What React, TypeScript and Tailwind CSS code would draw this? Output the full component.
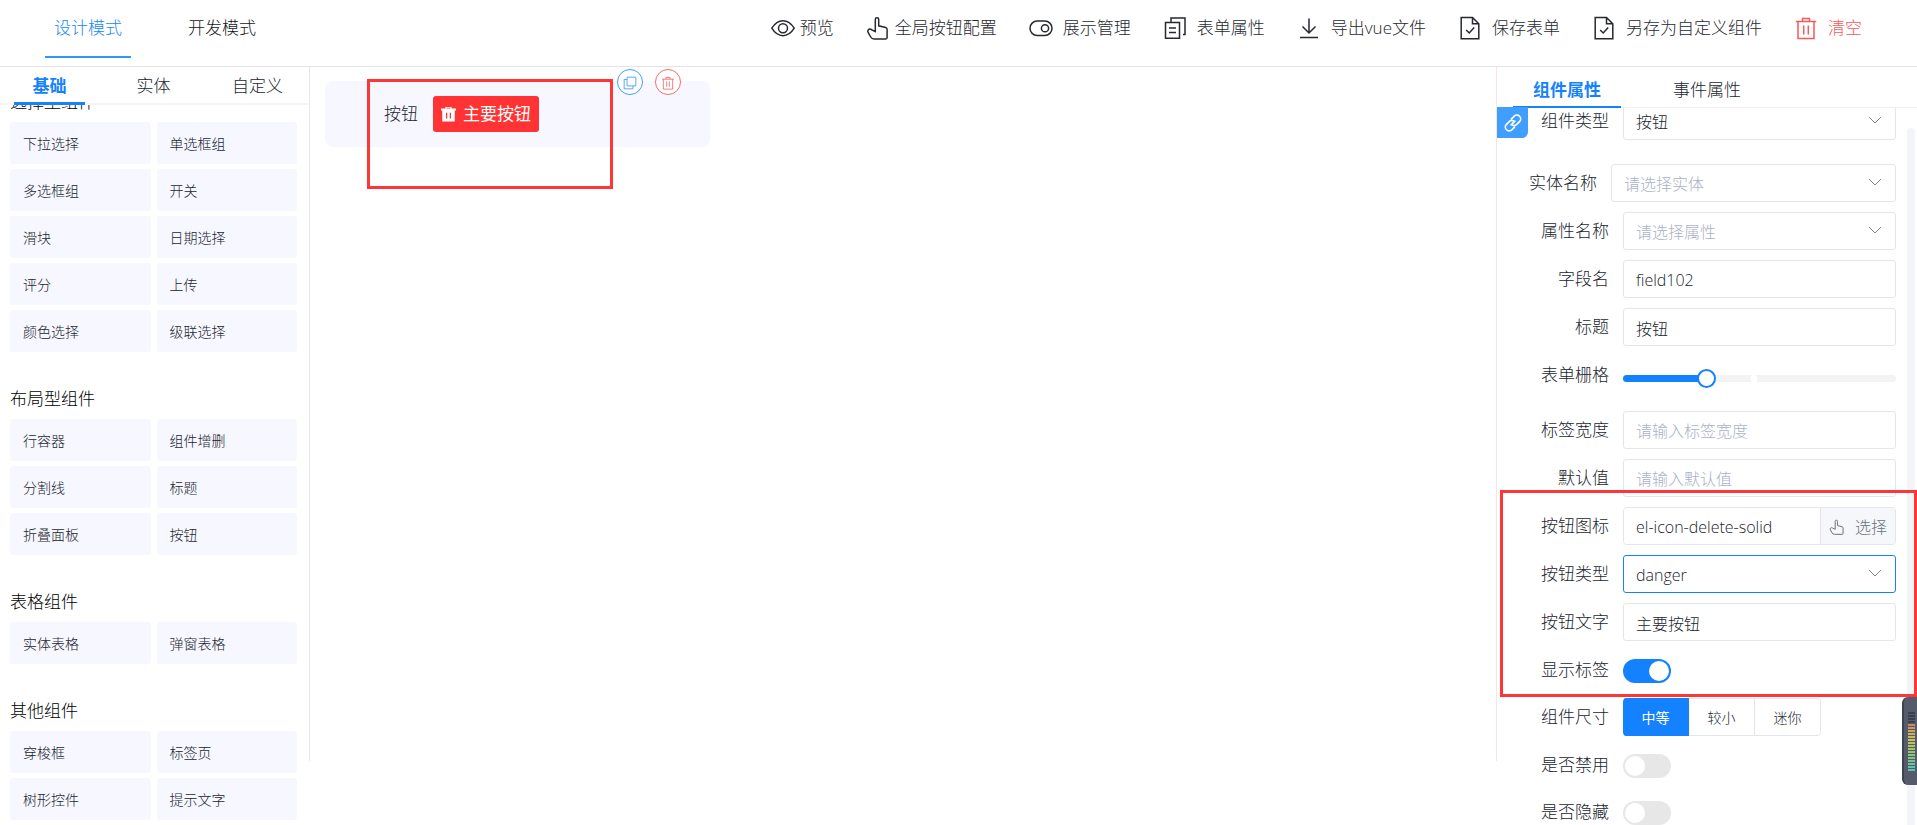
import React, { useState } from "react"

type IconProps = { className?: string }

const Svg: React.FC<React.PropsWithChildren<IconProps>> = ({ className, children }) => (
  <svg
    viewBox="0 0 24 24"
    fill="none"
    stroke="currentColor"
    strokeWidth="1.5"
    className={className ?? "size-6"}
    aria-hidden="true"
  >
    {children}
  </svg>
)

const EyeIcon: React.FC<IconProps> = ({ className }) => (
  <Svg className={className}>
    <path d="M.8 12.200C4 7 7.600 4.700 12 4.700s8 2.300 11.200 7.500c-3.200 5.200-6.800 7.500-11.200 7.500S4 17.400.8 12.200z" />
    <circle cx="12" cy="12.200" r="4.500" />
  </Svg>
)

const PointerIcon: React.FC<IconProps> = ({ className }) => (
  <Svg className={className}>
    <path d="M9.300 15.500V3.500a1.700 1.700 0 0 1 3.400 0v6.300l6.900 1.800a2 2 0 0 1 1.500 2V21.500a1.500 1.500 0 0 1-1.500 1.500H8.200a4 4 0 0 1-3.500-2L2 16.200c-.7-1.500.3-3.200 1.900-3.200.7 0 1.400.3 1.900.9z" />
  </Svg>
)

const SwitchIcon: React.FC<IconProps> = ({ className }) => (
  <Svg className={className}>
    <rect x="1" y="5" width="22" height="14.500" rx="7.250" />
    <circle cx="16" cy="12.250" r="3.600" />
  </Svg>
)

const DocumentCopyIcon: React.FC<IconProps> = ({ className }) => (
  <Svg className={className}>
    <path d="M2.500 6.500h14v15.800h-14zM8 6V2h14v16.500h-2M6 12h7M6 16.500h7" />
  </Svg>
)

const DownloadIcon: React.FC<IconProps> = ({ className }) => (
  <Svg className={className}>
    <path d="M12 2.500v14M5.500 10.500l6.500 6.500 6.500-6.500M3 21.500h18" />
  </Svg>
)

const DocumentCheckedIcon: React.FC<IconProps> = ({ className }) => (
  <Svg className={className}>
    <path d="M3.200 1.500h11.300l6.300 6.300v14.900H3.200zM14.500 1.500v6.300h6.300M8.200 14l3 3 5-5.500" />
  </Svg>
)

const DeleteIcon: React.FC<IconProps> = ({ className }) => (
  <Svg className={className}>
    <path d="M1.800 5.500h20.400M8.500 5.500v-3h7v3M4 5.500v17h16v-17M9.700 9.500v9M14.300 9.500v9" />
  </Svg>
)

const DeleteSolidIcon: React.FC<IconProps> = ({ className }) => (
  <svg viewBox="0 0 24 24" fill="currentColor" className={className} aria-hidden="true">
    <path
      fillRule="evenodd"
      d="M0 2.500h7V0h10v2.500h7v3h-2V23H2V5.500H0zM9 1.200v1.300h6V1.200zM8 9v9.500h2V9zM14 9v9.500h2V9z"
    />
  </svg>
)

const CopyIcon: React.FC<IconProps> = ({ className }) => (
  <Svg className={className}>
    <path d="M7 2h15v15H7zM7 6H2v16h15v-5" />
  </Svg>
)

const LinkIcon: React.FC<IconProps> = ({ className }) => (
  <svg
    viewBox="0 0 24 24"
    fill="none"
    stroke="currentColor"
    strokeWidth="2.200"
    strokeLinecap="round"
    className={className}
    aria-hidden="true"
  >
    <path d="M10 6.500l3.500-3.500a5 5 0 0 1 7.200 7.200L17 13.900a5 5 0 0 1-5.500 1" />
    <path d="M14 17.500L10.500 21a5 5 0 0 1-7.200-7.200L7 10.100a5 5 0 0 1 5.500-1" />
    <path d="M9.500 14.500l5-5" />
  </svg>
)

const ChevronIcon: React.FC<IconProps> = ({ className }) => (
  <svg viewBox="0 0 14 8" fill="none" stroke="currentColor" className={className} aria-hidden="true">
    <path d="M1 1l6 6 6-6" />
  </svg>
)

const toolbar = [
  { text: "预览", Icon: EyeIcon, style: "gap-[5px]" },
  { text: "全局按钮配置", Icon: PointerIcon, style: "gap-[5px]" },
  { text: "展示管理", Icon: SwitchIcon, style: "gap-2.5" },
  { text: "表单属性", Icon: DocumentCopyIcon, style: "gap-2.5" },
  { text: "导出vue文件", Icon: DownloadIcon, style: "gap-2.5" },
  { text: "保存表单", Icon: DocumentCheckedIcon, style: "gap-2.5" },
  { text: "另存为自定义组件", Icon: DocumentCheckedIcon, style: "gap-2.5" },
  { text: "清空", Icon: DeleteIcon, style: "gap-2.5 text-[#f45a5a]" },
]

const groups = [
  {
    title: "选择型组件",
    items: ["下拉选择", "单选框组", "多选框组", "开关", "滑块", "日期选择", "评分", "上传", "颜色选择", "级联选择"],
  },
  { title: "布局型组件", items: ["行容器", "组件增删", "分割线", "标题", "折叠面板", "按钮"] },
  { title: "表格组件", items: ["实体表格", "弹窗表格"] },
  { title: "其他组件", items: ["穿梭框", "标签页", "树形控件", "提示文字"] },
]

const meterColors = [
  "#3b3f4b", "#3b3f4b", "#3b3f4b", "#3b3f4b", "#c98a62", "#cf9560", "#d0a45c", "#d0b15a", "#cdbb58", "#c8c25a",
  "#bcc55c", "#b0c560", "#a3c566", "#97c56e", "#8bc578", "#80c584", "#76c590", "#6cc59c", "#62c5a8", "#58c5b2",
]

const Header: React.FC = () => {
  const [mode, setMode] = useState("设计模式")

  return (
    <header className="flex h-[67px] shrink-0 items-start justify-between border-b border-[#e4e4e6] pl-[45px] pr-[55px]">
      <nav className="flex gap-12">
        {["设计模式", "开发模式"].map((name) => (
          <button
            key={name}
            onClick={() => setMode(name)}
            className={
              mode === name
                ? "h-[58px] border-b-2 border-[#2d96ff] px-[9px] text-[#2088f5]"
                : "h-[58px] border-b-2 border-transparent px-[9px] text-[#15171a]"
            }
          >
            {name}
          </button>
        ))}
      </nav>
      <div className="flex h-14 items-center gap-8 whitespace-nowrap text-[#26292f]">
        {toolbar.map(({ text, Icon, style }) => (
          <button key={text} className={`flex items-center ${style}`}>
            <Icon />
            {text}
          </button>
        ))}
      </div>
    </header>
  )
}

const ComponentPanel: React.FC = () => {
  const [tab, setTab] = useState("基础")

  return (
    <aside className="flex w-[309px] shrink-0 flex-col">
      <nav className="flex h-[38px] shrink-0 gap-[33px] border-b-2 border-[#f5f5f6] pl-3.5">
        {["基础", "实体", "自定义"].map((name) => (
          <button
            key={name}
            onClick={() => setTab(name)}
            className={
              tab === name
                ? "-mb-0.5 w-[71px] border-b-3 border-[#1482ff] pt-0.5 font-bold text-[#1482ff]"
                : "-mb-0.5 w-[71px] border-b-3 border-transparent pt-0.5"
            }
          >
            {name}
          </button>
        ))}
      </nav>
      <div className="min-h-0 flex-1 overflow-hidden pl-2.5 pr-3">
        <div className="-mt-[15px] flex flex-col gap-[35px]">
          {groups.map((group) => (
            <section key={group.title}>
              <h3 className="mb-2 h-6 leading-6 text-black">{group.title}</h3>
              <div className="grid grid-cols-2 gap-x-1.5 gap-y-[5px]">
                {group.items.map((item) => (
                  <button
                    key={item}
                    className="h-[42px] cursor-move rounded-[3px] bg-[#f6f7ff] px-[13px] pt-0.5 text-left text-sm"
                  >
                    {item}
                  </button>
                ))}
              </div>
            </section>
          ))}
        </div>
      </div>
    </aside>
  )
}

const Canvas: React.FC = () => (
  <main className="relative h-[calc(100vh-131px)] min-w-0 flex-1 border-x border-l-[#ebe6e8] border-r-[#f8e4e6] px-[15px] pt-3.5">
    <div className="relative flex h-[66px] w-1/3 min-w-[385px] items-center rounded-lg bg-[#f6f7ff]">
      <span className="w-[93px] text-right">按钮</span>
      <button className="ml-[15px] flex h-9 items-center gap-[7px] rounded-[3px] bg-[#ff3334] px-2 font-normal text-white">
        <DeleteSolidIcon className="size-[15px]" />
        主要按钮
      </button>
      <div className="absolute -top-3 right-[29px] flex gap-3">
        <button
          aria-label="复制"
          className="flex size-[26px] items-center justify-center rounded-full border border-[#409eff] bg-white pt-0.5 text-[#409eff]"
        >
          <CopyIcon className="size-3.5" />
        </button>
        <button
          aria-label="删除"
          className="flex size-[26px] items-center justify-center rounded-full border border-[#f56c6c] bg-white pt-0.5 text-[#f56c6c]"
        >
          <DeleteIcon className="size-3.5" />
        </button>
      </div>
    </div>
    <div className="pointer-events-none absolute left-[57px] top-3 h-[110px] w-[246px] border-3 border-[#ff3636]" />
  </main>
)

interface RowProps {
  label: string
  id: string
  labelWidth?: string
  height?: string
  children: React.ReactNode
}

const Row: React.FC<RowProps> = ({ label, id, labelWidth = "w-28", height = "h-[38px]", children }) => (
  <div className={`flex items-start gap-3.5 ${height}`}>
    <label htmlFor={id} className={`shrink-0 text-right leading-[38px] ${labelWidth}`}>
      {label}
    </label>
    <div className="flex h-full min-w-0 flex-1 items-center">{children}</div>
  </div>
)

const inputStyle =
  "h-[38px] w-full min-w-0 rounded-[3px] border border-[#e4e5e8] bg-white px-3 pt-0.5 text-base outline-none placeholder:text-[#acb1c8]"

interface SelectProps {
  id: string
  value: string
  empty?: boolean
  active?: boolean
}

const Select: React.FC<SelectProps> = ({ id, value, empty, active }) => (
  <div className="relative w-full">
    <select
      id={id}
      className={`h-[38px] w-full appearance-none rounded-[3px] border bg-white px-3 pt-0.5 text-base outline-none ${
        active ? "border-[#1482ff]" : "border-[#e4e5e8]"
      } ${empty ? "text-[#acb1c8]" : "text-[#1a262e]"}`}
    >
      <option>{value}</option>
    </select>
    <ChevronIcon className="pointer-events-none absolute right-3.5 top-[14px] h-2 w-3.5 text-[#85888f]" />
  </div>
)

const Toggle: React.FC<{ id: string; defaultChecked?: boolean }> = ({ id, defaultChecked }) => (
  <input
    id={id}
    type="checkbox"
    role="switch"
    defaultChecked={defaultChecked}
    className="mt-0.5 flex h-6 w-12 appearance-none items-center rounded-full bg-[#e7e7e7] px-0.5 before:size-5 before:rounded-full before:bg-white checked:justify-end checked:bg-[#1482ff]"
  />
)

const SpanSlider: React.FC = () => {
  const [span, setSpan] = useState(8)
  const percent = (value: number) => `${((value - 1) / 23) * 100}%`

  return (
    <div className="relative h-[7px] w-full rounded-full bg-[#f3f3f4]">
      <div className="h-full rounded-full bg-[#1482ff]" style={{ width: percent(span) }} />
      <span className="absolute top-0 size-[7px] -translate-x-1/2 rounded-full bg-white" style={{ left: percent(12) }} />
      <input
        id="span"
        type="range"
        min={1}
        max={24}
        value={span}
        onChange={(e) => setSpan(Number(e.target.value))}
        className="absolute -left-[9px] -top-1.5 h-[19px] w-[calc(100%+18px)] appearance-none bg-transparent [&::-webkit-slider-thumb]:size-[19px] [&::-webkit-slider-thumb]:appearance-none [&::-webkit-slider-thumb]:rounded-full [&::-webkit-slider-thumb]:border-2 [&::-webkit-slider-thumb]:border-[#1482ff] [&::-webkit-slider-thumb]:bg-white"
      />
    </div>
  )
}

const SizeGroup: React.FC = () => {
  const [size, setSize] = useState("中等")

  return (
    <div className="flex h-[38px] overflow-hidden rounded text-sm">
      {["中等", "较小", "迷你"].map((name) => (
        <label
          key={name}
          className="flex w-[66px] items-center justify-center border-y border-r border-[#e4e5e8] pt-0.5 last:rounded-r has-checked:border-[#1482ff] has-checked:bg-[#1482ff] has-checked:font-normal has-checked:text-white"
        >
          <input
            id={name === "中等" ? "size" : undefined}
            type="radio"
            name="size"
            className="sr-only"
            checked={size === name}
            onChange={() => setSize(name)}
          />
          {name}
        </label>
      ))}
    </div>
  )
}

const PropertyPanel: React.FC = () => {
  const [tab, setTab] = useState("组件属性")

  return (
    <aside className="relative flex w-[420px] shrink-0 flex-col">
      <nav className="flex h-[41px] shrink-0 gap-8 border-b border-[#f0f0f2] pl-4">
        {["组件属性", "事件属性"].map((name) => (
          <button
            key={name}
            onClick={() => setTab(name)}
            className={
              tab === name
                ? "-mb-px border-b-2 border-[#1482ff] px-5 pt-1.5 font-bold text-[#1482ff]"
                : "-mb-px border-b-2 border-transparent px-5 pt-1.5"
            }
          >
            {name}
          </button>
        ))}
      </nav>
      <div className="min-h-0 flex-1 overflow-hidden pr-[21px]">
        <form className="-mt-1.5 flex flex-col gap-2.5" onSubmit={(e) => e.preventDefault()}>
          <div className="pb-3.5">
            <Row label="组件类型" id="type">
              <Select id="type" value="按钮" />
            </Row>
          </div>
          <Row label="实体名称" id="entity" labelWidth="w-25">
            <Select id="entity" value="请选择实体" empty />
          </Row>
          <Row label="属性名称" id="attribute">
            <Select id="attribute" value="请选择属性" empty />
          </Row>
          <Row label="字段名" id="field">
            <input id="field" className={inputStyle} defaultValue="field102" />
          </Row>
          <Row label="标题" id="title">
            <input id="title" className={inputStyle} defaultValue="按钮" />
          </Row>
          <Row label="表单栅格" id="span" height="h-[45px]">
            <SpanSlider />
          </Row>
          <Row label="标签宽度" id="label-width">
            <input id="label-width" className={inputStyle} placeholder="请输入标签宽度" />
          </Row>
          <Row label="默认值" id="default">
            <input id="default" className={inputStyle} placeholder="请输入默认值" />
          </Row>
          <Row label="按钮图标" id="icon">
            <div className="flex h-[38px] w-full overflow-hidden rounded border border-[#e4e5e8]">
              <input
                id="icon"
                className="min-w-0 flex-1 bg-white px-3 pt-0.5 text-base outline-none"
                defaultValue="el-icon-delete-solid"
              />
              <button className="flex w-[75px] shrink-0 items-center justify-center gap-2.5 border-l border-[#e4e5e8] bg-[#f5f7fa] pt-0.5 text-base text-[#6a727e]">
                <PointerIcon className="size-4" />
                选择
              </button>
            </div>
          </Row>
          <Row label="按钮类型" id="button-type">
            <Select id="button-type" value="danger" active />
          </Row>
          <Row label="按钮文字" id="button-text">
            <input id="button-text" className={inputStyle} defaultValue="主要按钮" />
          </Row>
          <Row label="显示标签" id="show-label" height="h-[37px]">
            <Toggle id="show-label" defaultChecked />
          </Row>
          <Row label="组件尺寸" id="size">
            <SizeGroup />
          </Row>
          <Row label="是否禁用" id="disabled" height="h-[37px]">
            <Toggle id="disabled" />
          </Row>
          <Row label="是否隐藏" id="hidden" height="h-[37px]">
            <Toggle id="hidden" />
          </Row>
        </form>
      </div>

      <a
        href="#help"
        aria-label="帮助文档"
        className="absolute left-0 top-10 flex size-[31px] items-center justify-center rounded-br-md bg-[#409eff] text-white"
      >
        <LinkIcon className="size-[18px]" />
      </a>
      <div className="absolute bottom-0 right-0.5 top-[61px] w-2 rounded-t-full bg-[#f3f4f8]" />
      <div className="pointer-events-none absolute left-[3px] right-0 top-[423px] h-[207px] border-3 border-[#ff3636]" />
      <div className="absolute right-0 top-[630px] flex h-[88px] w-[15px] flex-col justify-center gap-px rounded-l-md border-l-2 border-[#3d424f] bg-[#565b6b] pl-1 pr-0.5">
        {meterColors.map((color, i) => (
          <span key={i} className="h-0.5 w-full" style={{ background: color }} />
        ))}
      </div>
    </aside>
  )
}

const App: React.FC = () => {
  return (
    <div className="flex h-screen flex-col overflow-hidden bg-white font-['Open_Sans','Noto_Sans_CJK_SC',sans-serif] text-[17px] font-light text-[#1a262e]">
      <Header />
      <div className="flex min-h-0 flex-1 items-stretch">
        <ComponentPanel />
        <Canvas />
        <PropertyPanel />
      </div>
    </div>
  )
}

export default App
